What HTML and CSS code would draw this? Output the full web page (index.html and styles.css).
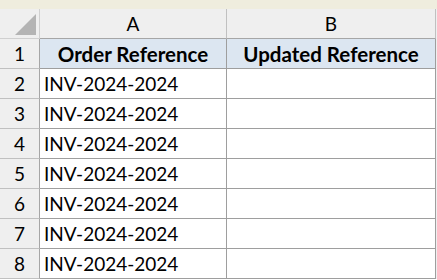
FILE: index.html
```html
<!DOCTYPE html>
<html>
<head>
<meta charset="utf-8">
<link rel="stylesheet" href="styles.css">
</head>
<body>
<div class="band"></div>
<div class="sheet">
  <div class="cell corner"><span class="tri"></span></div>
  <div class="cell colhead">A</div>
  <div class="cell colhead">B</div>

  <div class="cell rowhead">1</div>
  <div class="cell hdr">Order Reference</div>
  <div class="cell hdr">Updated Reference</div>

  <div class="cell rowhead">2</div>
  <div class="cell data">INV-2024-2024</div>
  <div class="cell data"></div>

  <div class="cell rowhead">3</div>
  <div class="cell data">INV-2024-2024</div>
  <div class="cell data"></div>

  <div class="cell rowhead">4</div>
  <div class="cell data">INV-2024-2024</div>
  <div class="cell data"></div>

  <div class="cell rowhead">5</div>
  <div class="cell data">INV-2024-2024</div>
  <div class="cell data"></div>

  <div class="cell rowhead">6</div>
  <div class="cell data">INV-2024-2024</div>
  <div class="cell data"></div>

  <div class="cell rowhead">7</div>
  <div class="cell data">INV-2024-2024</div>
  <div class="cell data"></div>

  <div class="cell rowhead">8</div>
  <div class="cell data">INV-2024-2024</div>
  <div class="cell data"></div>
</div>
</body>
</html>
```

FILE: styles.css
```css
html, body {
  margin: 0;
  padding: 0;
  background: #ffffff;
}
body {
  font-family: "Lato", "Noto Sans", sans-serif;
  font-size: 19px;
  color: #000;
}
.band {
  height: 9px;
  background: #efedde;
}
.sheet {
  display: grid;
  grid-template-columns: 40px 187px 209px;
  grid-auto-rows: 30px;
  background: #efefef;
  width: 437px;
}
.cell {
  box-sizing: border-box;
  border-right: 1px solid #9e9e9e;
  border-bottom: 1px solid #9e9e9e;
  display: flex;
  align-items: center;
  overflow: hidden;
  white-space: nowrap;
}
.corner {
  background: #efefef;
  border-color: #d0d0d0;
  position: relative;
}
.tri {
  position: absolute;
  left: 15px;
  top: 5px;
  width: 21px;
  height: 21px;
  background: #b4b4b4;
  clip-path: polygon(100% 0, 100% 100%, 0 100%);
}
.colhead {
  background: #efefef;
  justify-content: center;
  border-right-color: #c0c0c0;
  border-bottom-color: #a6a6a6;
}
.rowhead {
  background: #efefef;
  justify-content: center;
  border-right-color: #a6a6a6;
  border-bottom-color: #c0c0c0;
}
.hdr {
  background: #dce6f1;
  justify-content: center;
  font-weight: bold;
  font-size: 20.5px;
}
.data {
  background: #ffffff;
  padding-left: 4px;
}
```
